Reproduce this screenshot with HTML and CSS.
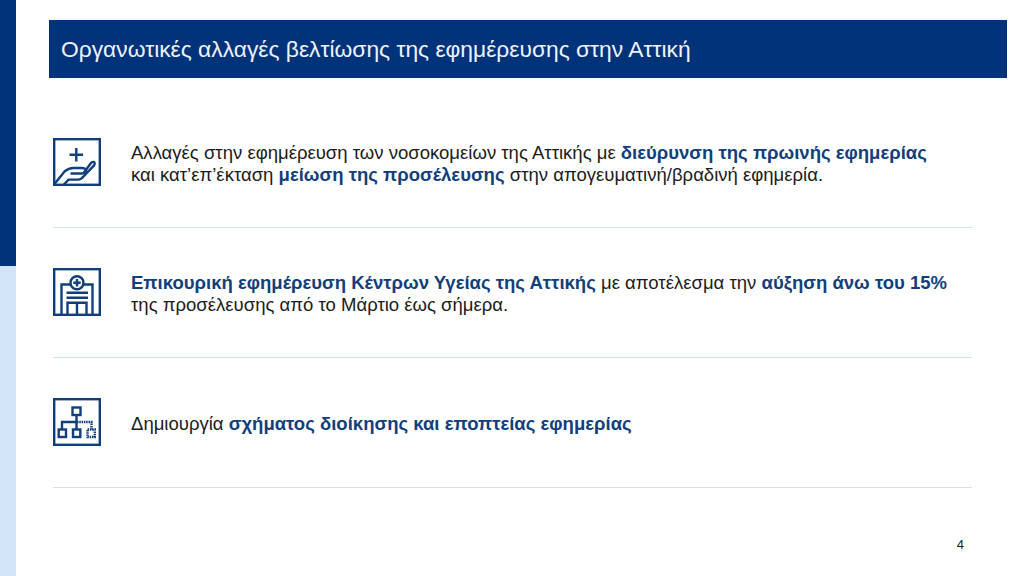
FILE: index.html
```html
<!DOCTYPE html>
<html lang="el">
<head>
<meta charset="utf-8">
<title>Οργανωτικές αλλαγές</title>
<link rel="stylesheet" href="styles.css">
</head>
<body>
<div class="slide">
  <aside class="rail"><div class="rail-dark"></div><div class="rail-light"></div></aside>
  <main class="content">
    <h1 class="title">Οργανωτικές αλλαγές βελτίωσης της εφημέρευσης στην Αττική</h1>
    <section class="rows">
      <article class="row">
        <svg class="icon" viewBox="0 0 48 48" fill="none">
          <rect x="1.200" y="1.200" width="45.600" height="45.600"/>
          <path d="M23.3 10v13.400M16.500 16.700h13.600"/>
          <path d="M1.500 46l10-12.500c3-2.600 6-3.500 9-3.500h8c3 0 5 1 4.600 3-.4 1.800-2 2.500-4 2.500H17.500"/>
          <path d="M31 34.500l7-9.500c1-1.300 3-1.500 3.600-.3.500 1-.1 2-.8 3L31 38c-2 2.500-3.500 3.600-6 3.600H15.500L10.500 47"/>
        </svg>
        <p class="text">Αλλαγές στην εφημέρευση των νοσοκομείων της Αττικής με <b>διεύρυνση της πρωινής εφημερίας</b><br>και κατ’επ’έκταση <b>μείωση της προσέλευσης</b> στην απογευματινή/βραδινή εφημερία.</p>
      </article>
      <article class="row">
        <svg class="icon" viewBox="0 0 48 48" fill="none">
          <rect x="1.200" y="1.200" width="45.600" height="45.600"/>
          <circle cx="24" cy="14.700" r="6.500"/>
          <path d="M24 11v7.400M20.300 14.700h7.400"/>
          <path d="M8.500 46.500V16.500h9M39.500 46.500V16.500h-9"/>
          <path d="M13.500 24.700h21.500M13.500 29.700h21.500"/>
          <path d="M14.500 46.500V34.700h19v11.800M24 34.700v11.800"/>
        </svg>
        <p class="text"><b>Επικουρική εφημέρευση Κέντρων Υγείας της Αττικής</b> με αποτέλεσμα την <b>αύξηση άνω του 15%</b><br>της προσέλευσης από το Μάρτιο έως σήμερα.</p>
      </article>
      <article class="row">
        <svg class="icon" viewBox="0 0 48 48" fill="none">
          <rect x="1.200" y="1.200" width="45.600" height="45.600"/>
          <rect x="19.500" y="9.500" width="8" height="7.500"/>
          <path d="M23.500 17v7H9v7.500M23.500 24v7.500"/>
          <rect x="5.700" y="31.500" width="7.300" height="7.500"/>
          <rect x="20" y="31.500" width="7.300" height="7.500"/>
          <path class="dots" d="M24 24h14.500v7.500"/>
          <rect class="dots" x="34.500" y="31.500" width="7.300" height="7.500"/>
        </svg>
        <p class="text">Δημιουργία <b>σχήματος διοίκησης και εποπτείας εφημερίας</b></p>
      </article>
    </section>
    <footer class="page">4</footer>
  </main>
</div>
</body>
</html>
```

FILE: styles.css
```css
* { box-sizing: border-box; }
html, body { margin: 0; padding: 0; }
body { font-family: "Liberation Sans", Arial, sans-serif; background: #fff; overflow: hidden; }
.slide { width: 1024px; height: 576px; display: flex; }
.rail { width: 16px; display: flex; flex-direction: column; }
.rail-dark { height: 266px; background: #00337a; }
.rail-light { flex: 1; background: #d2e4f7; }
.content { flex: 1; padding: 20px 17px 0 33px; display: flex; flex-direction: column; }
.title {
  margin: 0; height: 58px; padding-left: 12px;
  display: flex; align-items: center;
  background: #00337a; color: #eef3fa;
  font-size: 22.8px; font-weight: 400;
}
.rows { margin: 20px 35px 0 4px; display: flex; flex-direction: column; }
.row {
  height: 130px; padding: 40px 0 41px;
  display: flex; align-items: center; gap: 30px;
  border-bottom: 1px solid #cfe3f2;
}
.icon { width: 48px; height: 48px; flex: none; stroke: #123f7c; stroke-width: 2.4; }
.dots { stroke-dasharray: 1.500 .8; }
.text { margin: 0; padding-top: 4px; font-size: 18.55px; line-height: 22px; color: #1c1c1c; white-space: nowrap; }
.text b { color: #123f7c; }
.page { margin: 49px 0 0 0; padding-right: 43px; text-align: right; font-size: 13px; color: #222; }
```
